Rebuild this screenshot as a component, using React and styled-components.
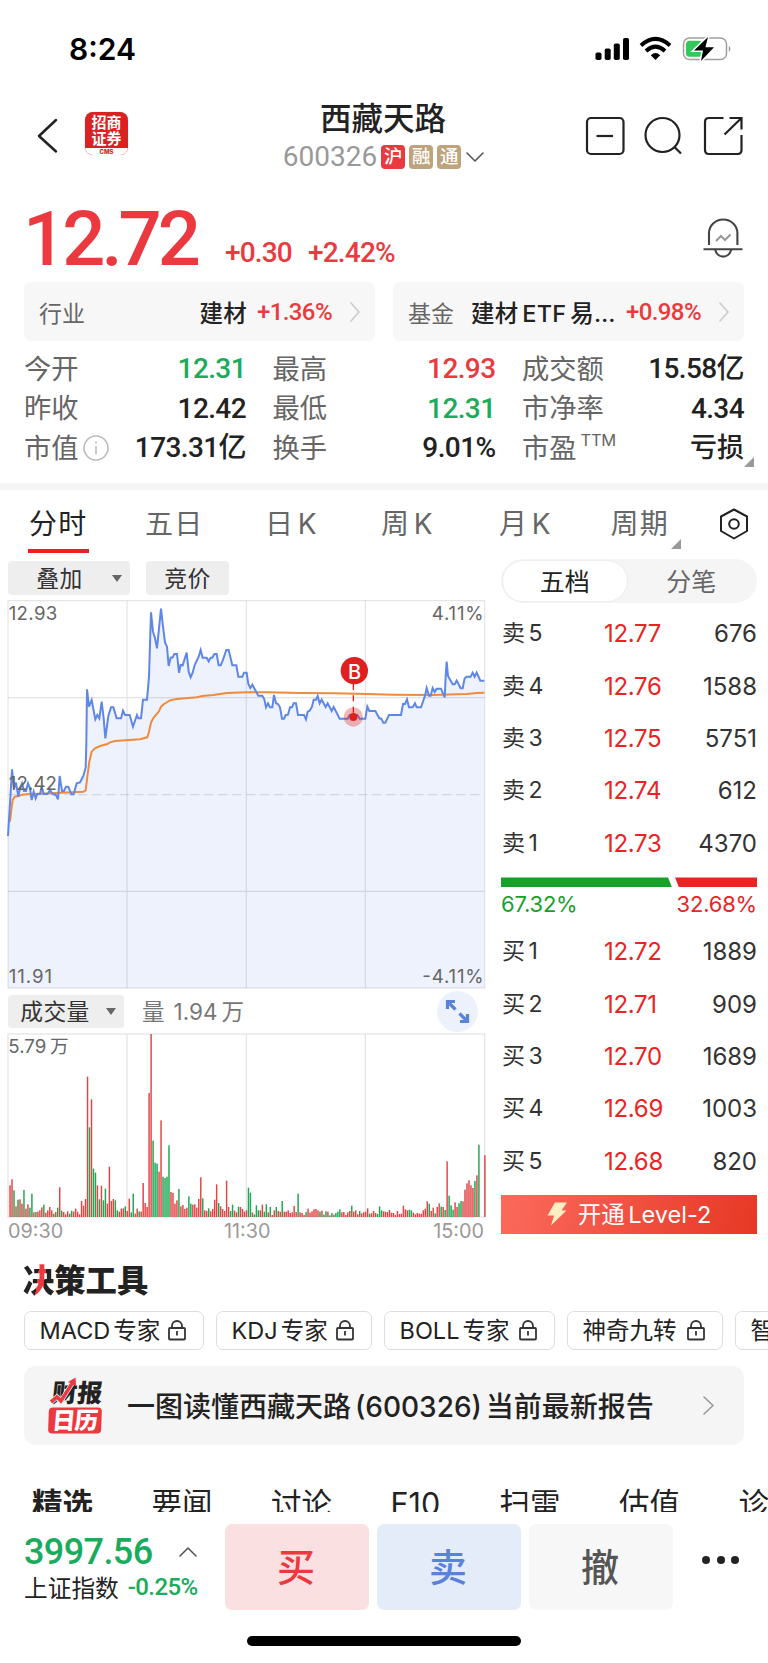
import React from 'react';
import styled, { createGlobalStyle } from 'styled-components';

const red = '#ea3a40';
const bookRed = '#ea2424';
const green = '#1aab5c';

const GlobalStyle = createGlobalStyle`
    * {
        box-sizing: border-box;
    }
    html, body {
        margin: 0;
        padding: 0;
    }
    body {
        width: 768px;
        height: 1663px;
        overflow: hidden;
        background: #fff;
        color: #222;
        font-family: Inter, "Noto Sans CJK SC", sans-serif;
    }
    svg {
        display: block;
        flex: none;
    }
`;

const Screen = styled.div`
    width: 768px;
    height: 1663px;
    overflow: hidden;
    display: flex;
    flex-direction: column;
    white-space: nowrap;
`;

/* narrow digits used for the quote numbers */
const Num = styled.span`
    font-family: Roboto, "Noto Sans CJK SC", sans-serif;
    font-size: ${p => p.$size || 28}px;
    font-weight: ${p => p.$weight || 500};
    color: ${p => p.$color || '#222'};
    letter-spacing: ${p => p.$ls ?? -0.6}px;
    line-height: 1;
`;

/* ---------- status bar ---------- */

const StatusBar = styled.header`
    height: 98px;
    padding: 0 36px 0 69px;
    display: flex;
    justify-content: space-between;
    align-items: center;
`;

const Clock = styled.div`
    font-size: 30px;
    font-weight: 600;
    color: #000;
    line-height: 98px;
`;

const StatusIcons = () => (
    <svg width="137" height="28" viewBox="0 0 137 28">
        <rect x="0.5" y="17.5" width="6" height="7.5" rx="1.8" />
        <rect x="9.7" y="13.5" width="6" height="11.5" rx="1.8" />
        <rect x="18.8" y="8.5" width="6" height="16.5" rx="1.8" />
        <rect x="28" y="3" width="6" height="22" rx="1.8" />
        <g fill="none" stroke="#000" strokeWidth="4">
            <path d="M46 10.4 Q60.5 -2.8 75 10.4" />
            <path d="M51 16 Q60.5 7.4 70 16" />
        </g>
        <path d="M60.5 25 L55.8 20.2 Q60.5 16 65.2 20.2 Z" />
        <rect x="88.5" y="3" width="43" height="21.6" rx="6" fill="none" stroke="#a0a0a0" strokeWidth="1.5" />
        <path d="M133.8 10.5 Q137 13.8 133.8 17.2 Z" fill="#999" />
        <rect x="91" y="5.8" width="16" height="16" rx="3.5" fill="#34c759" />
        <path d="M113 2 L99 15.6 H108 L106 26 L119 12.2 H110.4 Z" stroke="#fff" strokeWidth="3" />
        <path d="M113 2 L99 15.6 H108 L106 26 L119 12.2 H110.4 Z" />
    </svg>
);

/* ---------- title bar ---------- */

const TitleBar = styled.div`
    height: 82px;
    padding: 0 24px 0 37px;
    display: grid;
    grid-template-columns: 134px 1fr 160px;
`;

const TitleLeft = styled.div`
    display: flex;
    padding-top: 14px;
    gap: 26px;
`;

const BrokerLogo = styled.div`
    width: 43px;
    height: 43px;
    border-radius: 8px;
    overflow: hidden;
    background: #d92323;
    color: #fff;
    font-size: 15px;
    font-weight: 700;
    line-height: 16px;
    text-align: center;
    padding-top: 3px;
    box-shadow: 0 0 1px #aaa;
`;

const BrokerCode = styled.div`
    background: #fff;
    color: #d92323;
    font-size: 6px;
    line-height: 8px;
    font-weight: 800;
    margin-top: 1px;
`;

const TitleCenter = styled.div`
    display: flex;
    flex-direction: column;
    align-items: center;
    padding-left: 11px;
`;

const StockName = styled.h1`
    margin: 0;
    font-size: 31.5px;
    font-weight: 500;
    line-height: 42px;
`;

const CodeLine = styled.div`
    display: flex;
    align-items: center;
    gap: 4px;
    height: 33px;
    margin-left: 1px;
`;

const Tag = styled.span`
    width: 24px;
    height: 24px;
    border-radius: 4px;
    background: ${p => p.$bg};
    color: #fff;
    font-size: 18.5px;
    font-weight: 500;
    line-height: 23px;
    text-align: center;
`;

const TitleIcons = styled.div`
    display: flex;
    justify-content: flex-end;
    padding-top: 18px;
`;

/* ---------- price ---------- */

const PriceRow = styled.section`
    height: 102px;
    padding: 0 25px 0 23px;
    display: flex;
    align-items: flex-end;
`;

const LastPrice = styled(Num)`
    margin-bottom: 5px;
`;

const Changes = styled.div`
    display: flex;
    gap: 16px;
    margin: 0 auto 15px 28px;
`;

const Bell = () => (
    <svg width="40" height="42" viewBox="0 0 40 42" fill="none" stroke="#444" strokeWidth="2.1">
        <path d="M6 27 V15 A14.2 13.5 0 0 1 34.4 15 V27" />
        <path d="M0.5 31.3 H39.5 M12.3 32 A8 8.2 0 0 0 28 32" />
        <path d="M13 23 L18 18 L22 22 L27.5 16.5" stroke="#999" />
    </svg>
);

const BellWrap = styled.div`
    margin-bottom: 22px;
`;

/* ---------- related cards ---------- */

const Related = styled.section`
    display: flex;
    gap: 18px;
    padding: 0 24px;
    height: 59px;
`;

const RelatedCard = styled.div`
    flex: 1 1 0;
    min-width: 0;
    display: flex;
    align-items: center;
    background: #f7f7f7;
    border-radius: 7px;
    padding: 0 15px;
    font-size: 23.5px;
`;

const RelatedLabel = styled.span`
    color: #666;
    font-size: 23px;
`;

const RelatedName = styled.span`
    margin-left: ${p => p.$push ? 'auto' : '17px'};
    margin-right: 10px;
    font-weight: 500;
    word-spacing: -2.5px;
    letter-spacing: 0.2px;
`;

const RelatedChange = styled(Num)`
    margin-left: ${p => p.$push ? 'auto' : 0};
`;

const Chevron = ({ color = '#ccc', w = 10, h = 20, dir = 'right', sw = 1.6, ml = 0 }) => {
    const d = {
        right: `M1 1 L${w - 1} ${h / 2} L1 ${h - 1}`,
        down: `M1 1 L${w / 2} ${h - 1} L${w - 1} 1`,
        up: `M1 ${h - 1} L${w / 2} 1 L${w - 1} ${h - 1}`,
    }[dir];
    return (
        <svg width={w} height={h} style={{ marginLeft: ml }} fill="none" stroke={color} strokeWidth={sw}>
            <path d={d} strokeLinecap="round" strokeLinejoin="round" />
        </svg>
    );
};

/* ---------- stats ---------- */

const Stats = styled.section`
    display: grid;
    grid-template-columns: 222px 223px 222px;
    grid-auto-rows: 39.5px;
    column-gap: 26.5px;
    padding: 8.5px 24px 0;
    height: 142px;
`;

const Stat = styled.div`
    display: flex;
    align-items: center;
    justify-content: space-between;
    position: relative;
`;

const StatLabel = styled.span`
    display: flex;
    align-items: center;
    font-size: 27.3px;
    line-height: 39px;
    color: #666;
`;

const Ttm = styled.sup`
    font-size: 16.5px;
    line-height: 18px;
    margin: -17px 0 0 4px;
    letter-spacing: -0.3px;
    vertical-align: baseline;
`;

const Corner = styled.i`
    position: absolute;
    right: ${p => p.$right}px;
    bottom: ${p => p.$bottom}px;
    border-left: 10px solid transparent;
    border-bottom: 10px solid #999;
`;

const Band = styled.div`
    height: 7px;
    background: #f5f5f5;
`;

/* ---------- period tabs ---------- */

const Periods = styled.nav`
    height: 69px;
    padding-left: 29px;
    display: grid;
    grid-template-columns: 116px 120px 116px 118px 111.5px 109.5px 28px;
    justify-items: start;
    font-size: 28px;
    letter-spacing: 1.2px;
    word-spacing: -5.5px;
`;

const Period = styled.div`
    position: relative;
    height: 63px;
    line-height: 68px;
    color: ${p => p.$active ? '#222' : '#666'};
    &::after {
        content: "";
        display: ${p => p.$active ? 'block' : 'none'};
        position: absolute;
        left: -1px;
        right: -2px;
        bottom: 0;
        height: 4px;
        background: #f01e23;
    }
`;

/* ---------- chart + book ---------- */

const Main = styled.main`
    display: grid;
    grid-template-columns: 477px 256px;
    column-gap: 16px;
    padding: 0 8px;
    height: 690px;
`;

const ChartColumn = styled.div`
    padding-top: 2px;
`;

const Toolbar = styled.div`
    display: flex;
    align-items: center;
    height: ${p => p.$h}px;
    margin-bottom: ${p => p.$mb || 0}px;
`;

const Drop = styled.div`
    width: ${p => p.$w}px;
    height: 33.5px;
    border-radius: 4px;
    background: #eee;
    display: flex;
    align-items: center;
    justify-content: center;
    gap: ${p => p.$gap || 0}px;
    padding-left: ${p => p.$pl || 0}px;
    font-size: 22.8px;
    line-height: 33px;
    color: #333;
    margin-right: ${p => p.$mr || 0}px;
    letter-spacing: 0.4px;
`;

const Caret = styled.i`
    border: 5px solid transparent;
    border-top: 7px solid #666;
    border-bottom: 0;
`;

const VolumeText = styled.span`
    display: flex;
    gap: ${p => p.$gap}px;
    font-size: 22.5px;
    line-height: 33px;
    color: #777;
`;

const Expand = styled.div`
    width: 41px;
    height: 41px;
    border-radius: 50%;
    background: #ecf1fb;
    margin: -1px 7px 0 auto;
    display: grid;
    place-items: center;
`;

const ChartSvg = styled.svg`
    margin-left: -1px;
    overflow: visible;
    text {
        font-size: 56px;
        fill: #666;
    }
`;

const PRICE = '24,1038 30,940 36,838 42,895 48,878 55,920 60,895 66,880 72,903 78,903 84,880 90,895 95,930 101,905 107,925 112,912 120,912 125,890 131,912 143,912 150,900 158,912 168,915 174,928 179,858 186,903 192,903 198,890 205,890 214,913 221,913 230,880 240,877 250,858 257,833 259,760 261,598 267,650 275,630 286,688 292,675 298,685 305,635 311,685 316,745 325,678 333,652 340,652 350,685 363,685 369,662 375,675 389,675 399,710 411,675 415,685 423,685 429,629 441,629 447,560 453,367 459,425 465,445 471,475 483,356 489,410 495,458 501,470 506,528 512,503 518,502 523,492 531,492 537,548 542,525 548,526 560,488 566,545 572,562 578,548 584,525 596,500 602,480 608,503 620,503 626,514 632,503 637,503 643,492 650,492 656,526 662,526 668,512 679,480 686,480 697,526 709,526 715,560 727,560 732,548 740,548 745,582 751,594 757,584 769,606 775,617 787,617 793,628 798,652 804,640 810,652 817,652 822,615 828,640 834,642 840,652 846,686 852,686 857,675 864,674 870,652 876,652 881,640 888,640 894,675 912,675 918,688 923,665 929,662 936,650 941,629 948,629 953,618 959,640 965,629 977,651 983,640 995,663 1001,651 1019,686 1043,686 1049,675 1060,680 1072,675 1079,686 1096,686 1102,650 1108,663 1126,663 1138,685 1144,686 1150,698 1156,698 1167,675 1203,675 1209,642 1215,642 1221,628 1227,652 1238,652 1245,640 1250,652 1263,652 1275,617 1280,594 1287,617 1292,617 1298,594 1304,606 1310,596 1323,596 1334,622 1337,560 1340,515 1344,558 1358,583 1364,583 1370,572 1376,583 1382,595 1388,595 1394,565 1400,560 1412,560 1418,548 1424,560 1430,548 1441,572 1453,572';

const AVERAGE = '30,995 34,960 38,930 44,920 56,918 66,914 90,912 150,910 250,905 257,901 262,860 268,815 275,785 285,775 300,768 322,762 330,757 345,753 420,748 442,742 447,725 453,698 460,684 477,664 483,650 492,642 510,631 530,627 590,622 607,618 640,615 680,609 740,607 800,607 900,609 1000,610 1100,612 1180,614 1300,615 1370,613 1400,612 1430,609 1453,608';

/* one entry per minute, negative means a falling (green) minute */
const VOLUME = [
    95, 113, -80, 32, -52, 53, 40, -81, 25, 38, -28, -70, 14, -15, 16, 20, 29, -37, 13, 20,
    30, 20, -10, 15, -28, 89, -19, 15, 8, 17, -10, -19, 16, 25, 16, 8, 48, 34, 54, 421,
    -269, 353, -145, -133, 95, -53, 94, -50, -85, 40, 151, 48, 54, -50, -20, 16, 25, 26, -32, 18,
    55, -14, -70, 10, 25, -17, 16, 102, 42, 30, 372, 549, -229, -163, -160, 136, 290, -121, -117, -121,
    -215, 75, 72, 40, 50, -84, 32, 36, 24, 28, -62, -40, 37, 38, 28, 54, 119, -56, 20, 18,
    -26, 17, 24, 52, 98, -42, 32, 24, 18, 109, 30, -18, -37, 19, 14, -31, 30, 24, 16, 20,
    -88, -73, 14, -8, -35, -20, 20, 37, -16, -38, 14, -30, 6, 20, -30, 18, 16, -48, 16, 16,
    20, 12, 14, 33, 15, -70, 14, 12, 6, -15, 25, 13, 17, 23, 24, 20, -16, 19, -7, -17,
    16, -5, -12, 7, -12, -16, -23, 14, 15, 6, 14, 18, -34, 16, 20, 8, -18, 11, 14, 16,
    26, -10, 11, 18, 12, -9, -32, -20, 17, 16, 15, 21, 13, 12, 6, 18, 9, 10, 34, 23,
    20, -22, -20, 13, 8, 12, 10, 10, 20, 25, 47, -40, 18, 28, -11, 30, 41, -31, 30, -21,
    167, -64, -35, -22, 44, 30, -41, -48, 47, 82, 101, 110, 95, 87, -108, 125, -217, 0, 0, 185,
];

const PriceChart = () => (
    <ChartSvg width="479" height="391" viewBox="21 327 1437 1173">
        <polygon points={`${PRICE} 1453,1494 24,1494`} fill="#eef2fd" />
        <g stroke="#000" strokeOpacity="0.11" strokeWidth="3.5" fill="none">
            <rect x="24" y="332" width="1430" height="1162" />
            <path d="M381 332 V1494 M739 332 V1494 M1096 332 V1494 M24 623 H1454 M24 1204 H1454" />
            <path d="M24 914 H1454" strokeDasharray="28 14" />
        </g>
        <polyline points={AVERAGE} fill="none" stroke="#f08a3c" strokeWidth="6" />
        <polyline points={PRICE} fill="none" stroke="#5f87e8" strokeWidth="6" />
        <text x="26" y="389" textLength="146">12.93</text>
        <text x="1451" y="389" textAnchor="end" textLength="156">4.11%</text>
        <text x="26" y="899" textLength="145">12.42</text>
        <text x="26" y="1478" textLength="130">11.91</text>
        <text x="1451" y="1478" textAnchor="end" textLength="184">-4.11%</text>
        <path d="M1060 582 V672" stroke="#e01f1f" strokeWidth="4" strokeDasharray="18 16" />
        <circle cx="1060" cy="681" r="29" fill="#e01f1f" fillOpacity="0.33" />
        <circle cx="1060" cy="681" r="12" fill="#e01f1f" />
        <circle cx="1063" cy="542" r="41" fill="#e01f1f" />
        <text x="1064" y="566" textAnchor="middle" style={{ fill: '#fff', fontSize: 60, fontWeight: 500 }}>B</text>
    </ChartSvg>
);

const VolumeChart = () => (
    <ChartSvg width="479" height="185" viewBox="21 38 1437 555">
        <rect x="24" y="41" width="1430" height="549" fill="none" stroke="#e2e2e2" strokeWidth="3.5" />
        <path d="M381 41 V590 M739 41 V590 M1096 41 V590" stroke="#e2e2e2" strokeWidth="3.5" />
        {VOLUME.map((v, i) => (
            <rect
                key={i}
                x={24 + 5.96 * (i + 1) - 2}
                y={590 - Math.abs(v)}
                width="4.4"
                height={Math.abs(v)}
                fill={v < 0 ? '#1fa653' : '#e34545'}
            />
        ))}
        <text x="25" y="97" textLength="114">5.79</text>
        <text x="150" y="97">万</text>
    </ChartSvg>
);

const TimeAxis = styled.div`
    display: flex;
    justify-content: space-between;
    font-size: 19.8px;
    line-height: 27px;
    color: #999;
    padding: 0 1px 0 0;
    span:nth-child(2) {
        margin-right: 2px;
    }
`;

const Book = styled.div`
    display: flex;
    flex-direction: column;
`;

const Switch = styled.div`
    height: 43.5px;
    border-radius: 22px;
    background: #f5f5f5;
    display: flex;
    padding: 1.5px;
    margin-bottom: 5px;
`;

const SwitchItem = styled.div`
    width: ${p => p.$active ? 125 : 129}px;
    border-radius: 21px;
    background: ${p => p.$active ? '#fff' : 'transparent'};
    box-shadow: ${p => p.$active ? '0 0 2px #ddd' : 'none'};
    color: ${p => p.$active ? '#222' : '#666'};
    font-size: 25px;
    line-height: 42px;
    text-align: center;
`;

const BookRow = styled.div`
    height: 52.4px;
    display: grid;
    grid-template-columns: 102px 1fr 1fr;
    align-items: center;
    padding: 0 0 0 1px;
    font-size: 24px;
    color: #333;
    span:nth-child(2) {
        color: ${bookRed};
        letter-spacing: -0.3px;
    }
    span:nth-child(3) {
        text-align: right;
    }
`;

const Side = styled.span`
    word-spacing: -3px;
    font-size: 23px;
    line-height: 24px;
    padding-bottom: 1px;
`;

const Ratio = styled.div`
    display: flex;
    gap: 3px;
    height: 10px;
    margin-top: 8px;
`;

const RatioPart = styled.div`
    flex: ${p => p.$share};
    background: ${p => p.$color};
    clip-path: ${p => p.$left
        ? 'polygon(0 0, calc(100% - 4px) 0, 100% 100%, 0 100%)'
        : 'polygon(0 0, 100% 0, 100% 100%, 4px 100%)'};
`;

const RatioText = styled.div`
    display: flex;
    justify-content: space-between;
    font-size: 22px;
    line-height: 34px;
    height: 38px;
    letter-spacing: -0.2px;
    color: ${bookRed};
    span:first-child {
        color: #17a129;
    }
`;

const Level = styled.div`
    margin-top: 7.5px;
    height: 39px;
    background: linear-gradient(100deg, #fb6a5c, #e73825);
    color: #fff;
    font-size: 23.5px;
    line-height: 39px;
    display: flex;
    align-items: center;
    justify-content: center;
    gap: 10px;
    word-spacing: -3px;
`;

/* ---------- tools ---------- */

const ToolsTitle = styled.h2`
    margin: 0;
    padding: 14px 23px 0;
    height: 62px;
    font-size: 31.3px;
    line-height: 36px;
    font-weight: 900;
    color: #222;
`;

const RedPart = styled.span`
    background: linear-gradient(98deg, #222 46%, ${red} 46%, ${red} 66%, #222 66%);
    background-clip: text;
    -webkit-text-fill-color: transparent;
`;

const Chips = styled.div`
    display: flex;
    gap: 12px;
    padding-left: 24px;
    height: 55px;
    overflow: hidden;
`;

const Chip = styled.div`
    flex: none;
    width: ${p => p.$w}px;
    height: 39px;
    border: 1.5px solid #ddd;
    border-radius: 7px;
    padding: 0 17.5px 0 14.5px;
    display: flex;
    align-items: center;
    justify-content: space-between;
    font-size: 23.5px;
    line-height: 37px;
    word-spacing: -3.5px;
`;

const Lock = () => (
    <svg width="18" height="21" viewBox="0 0 18 21" fill="none" stroke="#333" strokeWidth="1.8">
        <rect x="1" y="8" width="16" height="11.5" rx="1" />
        <path d="M4 8 V6 A5 5 0 0 1 14 6 V8 M9 11 V15.5" />
    </svg>
);

const Banner = styled.div`
    margin: 0 24px;
    height: 79px;
    border-radius: 12px;
    background: #f5f5f5;
    display: flex;
    align-items: center;
    padding: 0 30px 0 24px;
    font-size: 28px;
    font-weight: 500;
`;

const BannerText = styled.span`
    margin: 0 auto 0 23px;
    word-spacing: -3.5px;
    padding-bottom: 2px;
`;

const ReportLogo = () => (
    <svg width="56" height="58" viewBox="0 0 56 58" fontWeight="900" fontFamily="Noto Sans CJK SC, sans-serif">
        <text x="6" y="25" fontSize="25" textLength="50" transform="skewX(-6)" fill="#222">财报</text>
        <path d="M3 25 L9 20 L13 24 L25 5" stroke="#f5f5f5" strokeWidth="5" fill="none" />
        <path d="M3 25 L9 20 L13 24 L25 5" stroke={red} strokeWidth="3.6" fill="none" />
        <path d="M20 5 L27.5 0.5 L28 9 Z" fill={red} />
        <rect x="2" y="30.5" width="53" height="26" rx="4" fill={red} transform="skewX(-2)" />
        <text x="8" y="52.5" fontSize="23.5" textLength="46" transform="skewX(-5)" fill="#fff">日历</text>
    </svg>
);

const NewsTabs = styled.nav`
    height: 67px;
    padding: 37px 0 0 32px;
    display: flex;
    overflow: hidden;
    font-size: 30.5px;
    line-height: 44px;
`;

const NewsTab = styled.div`
    flex: none;
    width: ${p => p.$w || 119.5}px;
    font-weight: ${p => p.$active ? 700 : 400};
`;

/* ---------- bottom bar ---------- */

const BottomBar = styled.footer`
    display: flex;
    height: 151px;
    padding: 12px 29px 0 24px;
`;

const Index = styled.div`
    width: 200.5px;
    padding-top: 10px;
`;

const IndexLine = styled.div`
    display: flex;
    align-items: center;
    height: ${p => p.$h}px;
    font-size: 23.7px;
    gap: ${p => p.$gap}px;
`;

const Trade = styled.button`
    width: 144px;
    height: 86px;
    margin-right: 8px;
    padding: 0 1px 5px 0;
    border: 0;
    border-radius: 7px;
    background: ${p => p.$bg};
    color: ${p => p.$color};
    font-family: inherit;
    font-size: 38px;
    font-weight: 500;
`;

const More = styled.div`
    display: flex;
    gap: 6.5px;
    margin: 32px 0 0 auto;
    i {
        width: 8px;
        height: 8px;
        border-radius: 50%;
        background: #222;
    }
`;

const HomeBar = styled.div`
    position: absolute;
    left: 247px;
    top: 1636px;
    width: 274px;
    height: 10px;
    border-radius: 5px;
    background: #000;
`;

const asks = [['5', '12.77', '676'], ['4', '12.76', '1588'], ['3', '12.75', '5751'], ['2', '12.74', '612'], ['1', '12.73', '4370']];
const bids = [['1', '12.72', '1889'], ['2', '12.71', '909'], ['3', '12.70', '1689'], ['4', '12.69', '1003'], ['5', '12.68', '820']];

const renderRow = (side) => ([level, price, qty]) => (
    <BookRow key={level}>
        <Side>{side} {level}</Side>
        <span>{price}</span>
        <span>{qty}</span>
    </BookRow>
);

export default function App() {
    return (
        <Screen>
            <GlobalStyle />
            <StatusBar>
                <Clock>8:24</Clock>
                <StatusIcons />
            </StatusBar>

            <TitleBar>
                <TitleLeft>
                    <svg width="22" height="44" fill="none" stroke="#222" strokeWidth="2.5">
                        <path d="M19 8 L2 24 L19 39.5" strokeLinecap="round" strokeLinejoin="round" />
                    </svg>
                    <BrokerLogo>
                        招商<br />证券
                        <BrokerCode>CMS</BrokerCode>
                    </BrokerLogo>
                </TitleLeft>
                <TitleCenter>
                    <StockName>西藏天路</StockName>
                    <CodeLine>
                        <Num $color="#999" $weight={400} $ls={0}>600326</Num>
                        <Tag $bg={red}>沪</Tag>
                        <Tag $bg="#bfa37c">融</Tag>
                        <Tag $bg="#bfa37c">通</Tag>
                        <Chevron dir="down" w={18} h={10} color="#555" ml={1} />
                    </CodeLine>
                </TitleCenter>
                <TitleIcons>
                    <svg width="159" height="40" viewBox="0 0 159 40" fill="none" stroke="#222" strokeWidth="2.2">
                        <rect x="2" y="2" width="36.5" height="36" rx="4" />
                        <path d="M11.5 20 H28" />
                        <circle cx="77.5" cy="19" r="17" />
                        <path d="M89.5 31 L96 37.5" />
                        <path d="M138.5 2 H124 Q120 2 120 6 V34 Q120 38 124 38 H152.5 Q156.5 38 156.5 34 V19" />
                        <path d="M144.5 2 H156.5 V13.5 M156.5 2 L139.5 18.5" />
                    </svg>
                </TitleIcons>
            </TitleBar>

            <PriceRow>
                <LastPrice $size={76} $color={red} $ls={-4}>12.72</LastPrice>
                <Changes>
                    <Num $color={red} $ls={-0.8}>+0.30</Num>
                    <Num $color={red} $ls={-0.8}>+2.42%</Num>
                </Changes>
                <BellWrap><Bell /></BellWrap>
            </PriceRow>

            <Related>
                <RelatedCard>
                    <RelatedLabel>行业</RelatedLabel>
                    <RelatedName $push>建材</RelatedName>
                    <RelatedChange $size={24} $color={red}>+1.36%</RelatedChange>
                    <Chevron ml={18} />
                </RelatedCard>
                <RelatedCard>
                    <RelatedLabel>基金</RelatedLabel>
                    <RelatedName>建材 ETF 易…</RelatedName>
                    <RelatedChange $push $size={24} $color={red}>+0.98%</RelatedChange>
                    <Chevron ml={18} />
                </RelatedCard>
            </Related>

            <Stats>
                <Stat><StatLabel>今开</StatLabel><Num $color={green}>12.31</Num></Stat>
                <Stat><StatLabel>最高</StatLabel><Num $color={red}>12.93</Num></Stat>
                <Stat><StatLabel>成交额</StatLabel><Num>15.58亿</Num></Stat>
                <Stat><StatLabel>昨收</StatLabel><Num>12.42</Num></Stat>
                <Stat><StatLabel>最低</StatLabel><Num $color={green}>12.31</Num></Stat>
                <Stat><StatLabel>市净率</StatLabel><Num>4.34</Num></Stat>
                <Stat>
                    <StatLabel>
                        市值
                        <svg width="30" height="28" viewBox="0 0 30 28" fill="none" stroke="#bbb" strokeWidth="1.6">
                            <circle cx="17" cy="14" r="12" />
                            <path d="M17 12 V20 M17 7.5 V9.5" />
                        </svg>
                    </StatLabel>
                    <Num>173.31亿</Num>
                </Stat>
                <Stat><StatLabel>换手</StatLabel><Num>9.01%</Num></Stat>
                <Stat>
                    <StatLabel>市盈<Ttm>TTM</Ttm></StatLabel>
                    <Num $size={27} $ls={0}>亏损</Num>
                    <Corner $right={-10} $bottom={1} />
                </Stat>
            </Stats>
            <Band />

            <Periods>
                <Period $active>分时</Period>
                <Period>五日</Period>
                <Period>日 K</Period>
                <Period>周 K</Period>
                <Period>月 K</Period>
                <Period>周期<Corner $right={-12} $bottom={4} /></Period>
                <svg width="28" height="68" viewBox="0 0 28 68" fill="none" stroke="#222" strokeWidth="2">
                    <path d="M14 19.5 L27 26.5 V41 L14 48.5 L1 41 V26.5 Z" strokeLinejoin="round" />
                    <circle cx="14" cy="34" r="4.8" />
                </svg>
            </Periods>

            <Main>
                <ChartColumn>
                    <Toolbar $h={34} $mb={4}>
                        <Drop $w={122} $gap={29} $pl={20} $mr={16}>叠加<Caret /></Drop>
                        <Drop $w={83}>竞价</Drop>
                    </Toolbar>
                    <PriceChart />
                    <Toolbar $h={43}>
                        <Drop $w={116} $gap={16} $pl={4} $mr={18}>成交量<Caret /></Drop>
                        <VolumeText $gap={9}>量<VolumeText $gap={4}><span>1.94</span><span>万</span></VolumeText></VolumeText>
                        <Expand>
                            <svg width="25" height="25" viewBox="0 0 25 25" fill="none" stroke="#5a83d8" strokeWidth="3.2">
                                <path d="M2.5 10 V2.5 H10 M2.5 2.5 L10.5 10.5 M22.5 15 V22.5 H15 M22.5 22.5 L14.5 14.5" />
                            </svg>
                        </Expand>
                    </Toolbar>
                    <VolumeChart />
                    <TimeAxis><span>09:30</span><span>11:30</span><span>15:00</span></TimeAxis>
                </ChartColumn>

                <Book>
                    <Switch>
                        <SwitchItem $active>五档</SwitchItem>
                        <SwitchItem>分笔</SwitchItem>
                    </Switch>
                    {asks.map(renderRow('卖'))}
                    <Ratio>
                        <RatioPart $left $share={67.6} $color="#17a129" />
                        <RatioPart $share={32.4} $color={bookRed} />
                    </Ratio>
                    <RatioText><span>67.32%</span><span>32.68%</span></RatioText>
                    {bids.map(renderRow('买'))}
                    <Level>
                        <svg width="21" height="24" viewBox="0 0 21 24">
                            <path d="M8 0.5 L20 0.5 L14.5 8.5 L19.5 8.5 L4 23.5 L7 13.5 L0.5 13.5 Z" fill="#ffedc4" />
                        </svg>
                        开通 Level-2
                    </Level>
                </Book>
            </Main>

            <ToolsTitle><RedPart>决</RedPart>策工具</ToolsTitle>
            <Chips>
                <Chip $w={180}>MACD 专家<Lock /></Chip>
                <Chip $w={156}>KDJ 专家<Lock /></Chip>
                <Chip $w={171}>BOLL 专家<Lock /></Chip>
                <Chip $w={156}>神奇九转<Lock /></Chip>
                <Chip $w={156}>智能盯盘<Lock /></Chip>
            </Chips>
            <Banner>
                <ReportLogo />
                <BannerText>一图读懂西藏天路 (600326) 当前最新报告</BannerText>
                <Chevron color="#999" w={11} h={19} />
            </Banner>
            <NewsTabs>
                <NewsTab $active>精选</NewsTab>
                <NewsTab>要闻</NewsTab>
                <NewsTab>讨论</NewsTab>
                <NewsTab $w={109}>F10</NewsTab>
                <NewsTab>扫雷</NewsTab>
                <NewsTab>估值</NewsTab>
                <NewsTab>诊股</NewsTab>
            </NewsTabs>

            <BottomBar>
                <Index>
                    <IndexLine $h={36} $gap={26}>
                        <Num $size={36} $color={green} $ls={-0.6}>3997.56</Num>
                        <Chevron dir="up" w={18} h={10} color="#555" />
                    </IndexLine>
                    <IndexLine $h={34} $gap={9}>
                        上证指数
                        <Num $size={24} $color={green}>-0.25%</Num>
                    </IndexLine>
                </Index>
                <Trade $bg="#fbe0e2" $color={red}>买</Trade>
                <Trade $bg="#e5ecf9" $color="#5a83d8">卖</Trade>
                <Trade $bg="#f7f7f7" $color="#555">撤</Trade>
                <More><i /><i /><i /></More>
            </BottomBar>
            <HomeBar />
        </Screen>
    );
}
